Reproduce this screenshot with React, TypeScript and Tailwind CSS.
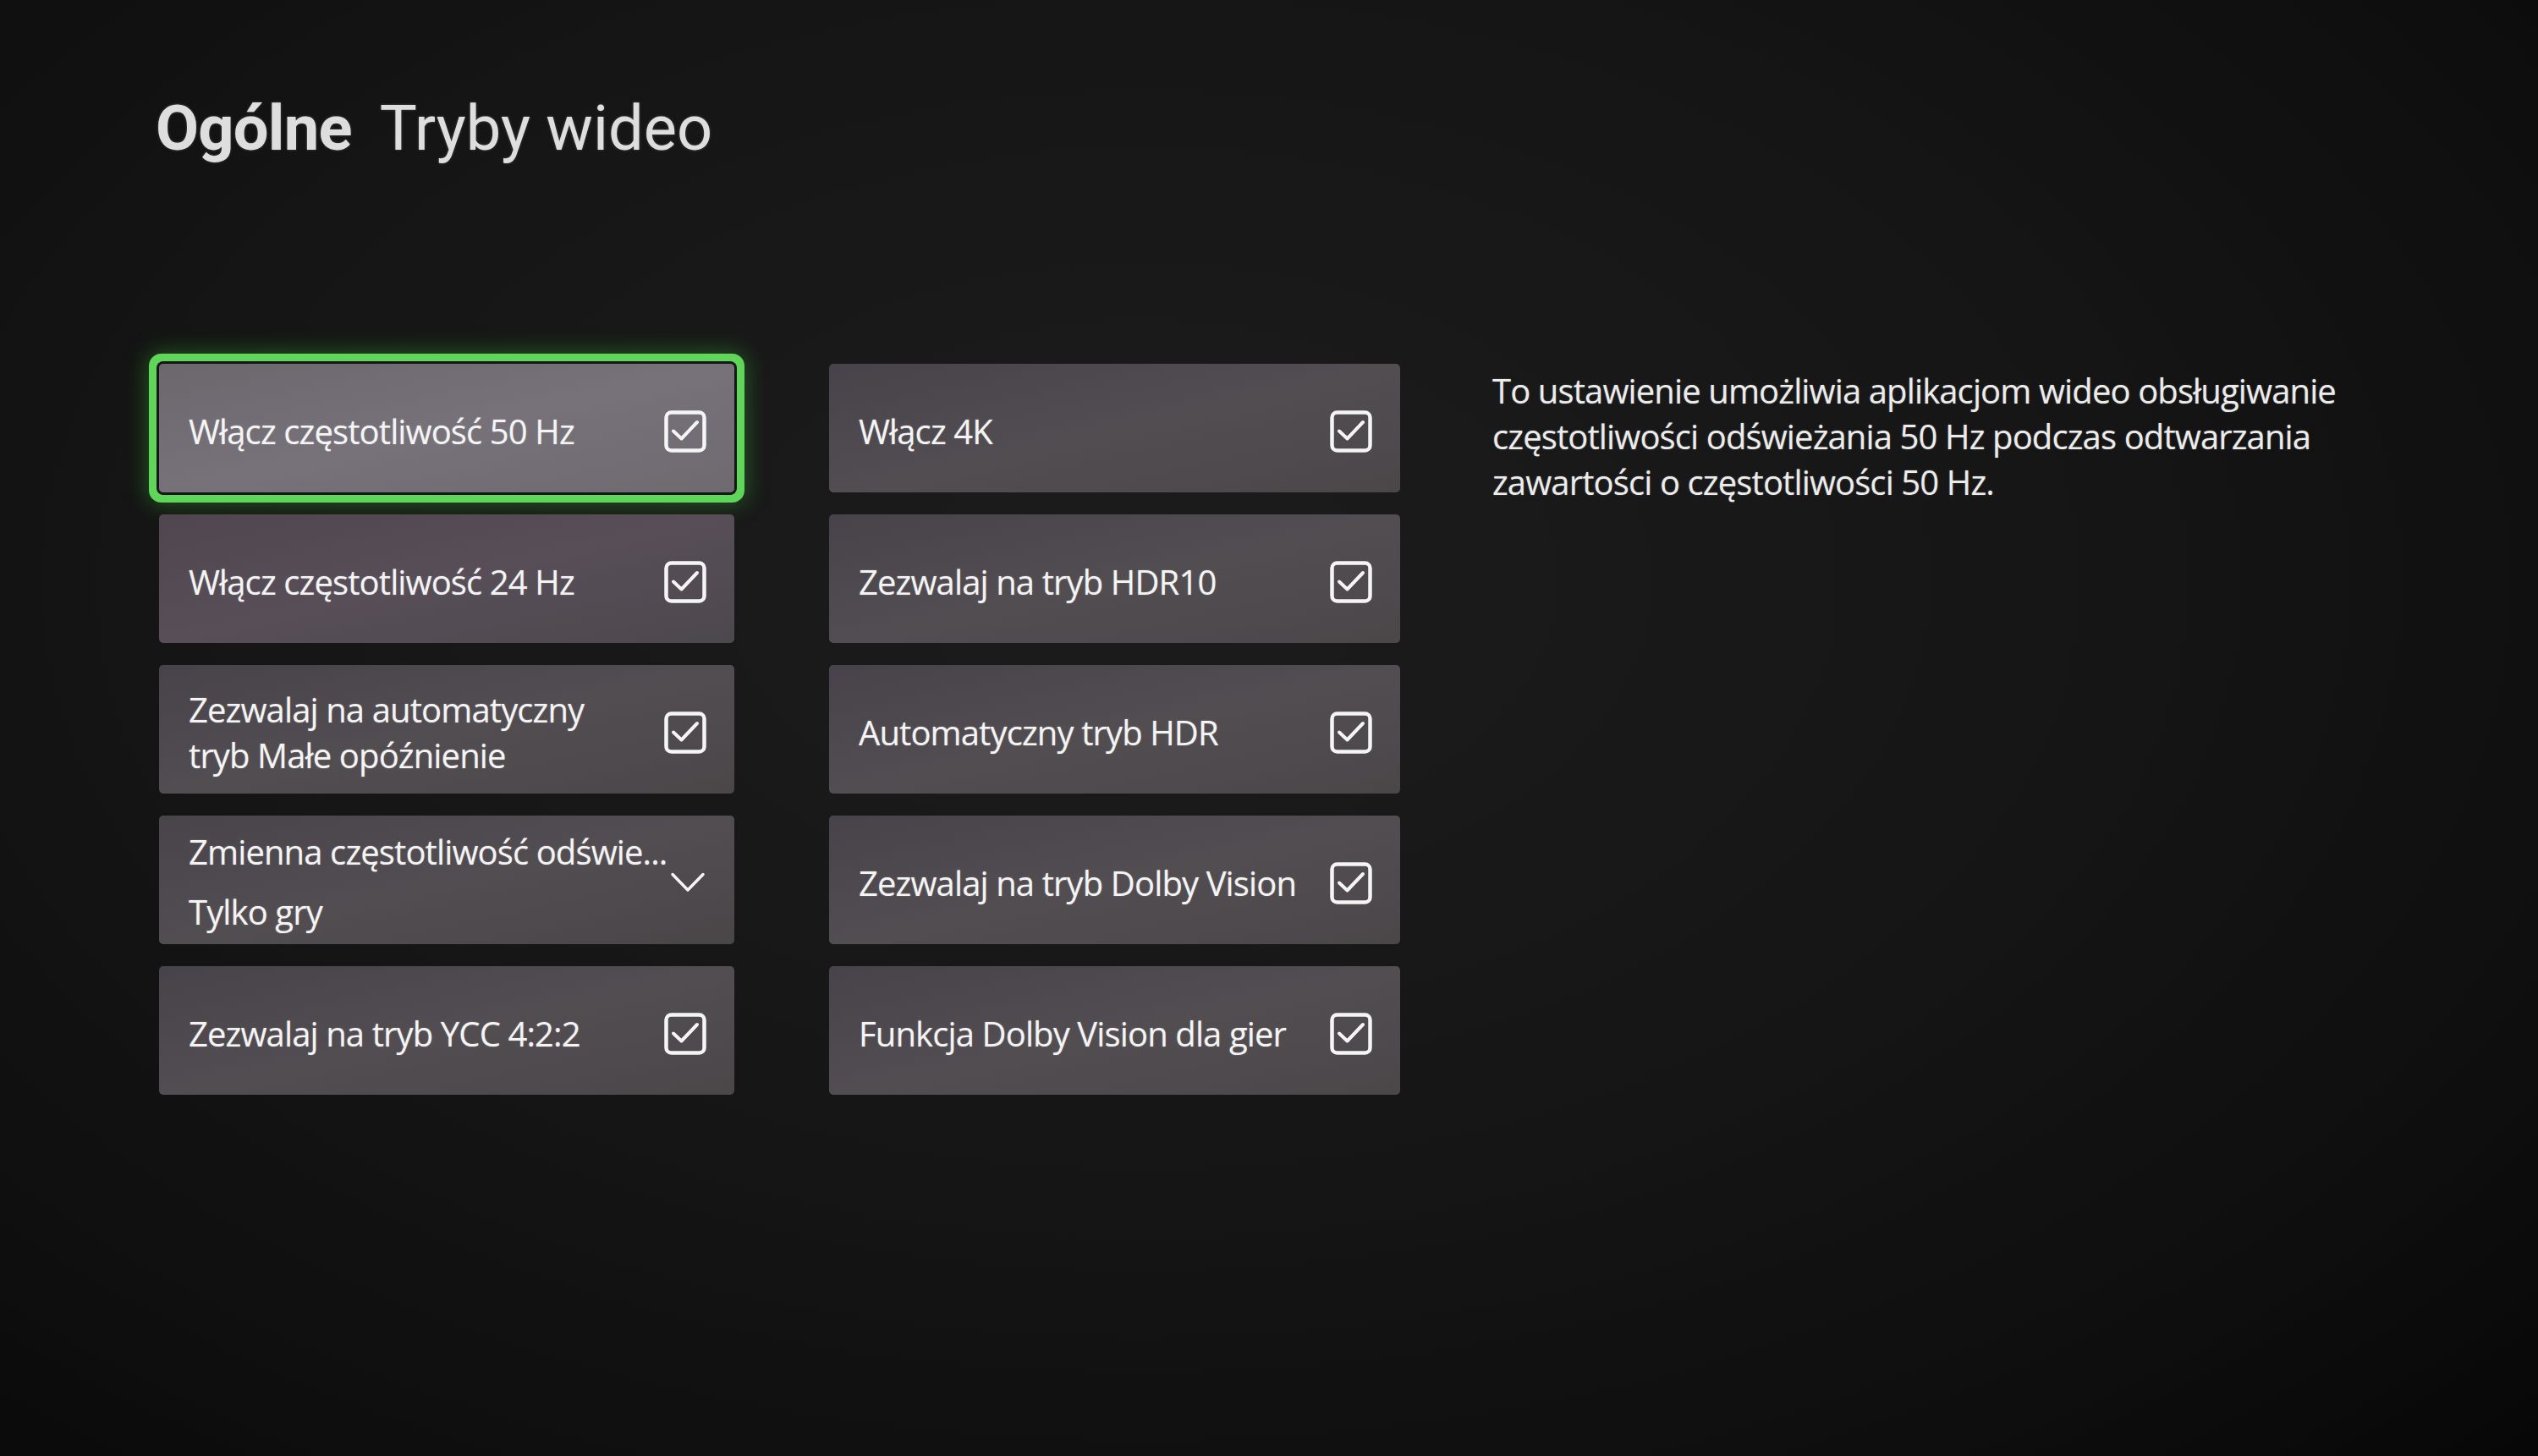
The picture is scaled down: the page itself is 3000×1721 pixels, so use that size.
import React from "react";

function CheckBox() {
  return (
    <svg width="50" height="50" viewBox="0 0 50 50" fill="none" className="shrink-0">
      <rect x="2.5" y="2.5" width="45" height="45" rx="6" stroke="#f5f5f5" strokeWidth="4.5" />
      <path d="M11 24.5 L20.5 33.5 L39 14" stroke="#f5f5f5" strokeWidth="4" strokeLinecap="round" strokeLinejoin="round" />
    </svg>
  );
}

function Chevron() {
  return (
    <div className="flex w-[50px] shrink-0 justify-center">
      <svg width="42" height="26" viewBox="0 0 42 26" fill="none">
        <path d="M3 3.5 L21 22 L39 3.5" stroke="#f5f5f5" strokeWidth="3.5" strokeLinecap="round" strokeLinejoin="round" />
      </svg>
    </div>
  );
}

type Item = { lines: string[]; focused?: boolean; tint?: boolean };

const labelText =
  "flex flex-col text-[40px] leading-[54px] tracking-[-0.022em] text-[#f4f4f4] [text-shadow:0_0_2px_rgba(255,255,255,0.3)]";

function Tile({ lines, focused, tint }: Item) {
  const base =
    "flex h-[152px] items-center justify-between rounded-[5px] pl-[35px] pr-[33px] pt-[7px]";
  const bg = focused
    ? "bg-gradient-to-br from-[#6c676d] via-[#77727a] to-[#6e6a70] shadow-[0_0_0_3px_#161616,0_0_0_12px_#5fd65a,0_0_26px_14px_rgba(60,190,60,0.38)]"
    : tint
    ? "bg-gradient-to-br from-[#4f4650] via-[#574e58] to-[#4d484d]"
    : "bg-gradient-to-br from-[#47434a] via-[#524d51] to-[#4b4749]";
  return (
    <div className={`${base} ${bg}`}>
      <div className={labelText}>
        {lines.map((l) => (
          <span key={l} className="whitespace-nowrap">
            {l}
          </span>
        ))}
      </div>
      <CheckBox />
    </div>
  );
}

function Dropdown({ label, value }: { label: string; value: string }) {
  return (
    <div className="flex h-[152px] items-center justify-between rounded-[5px] bg-gradient-to-br from-[#48444a] via-[#524d51] to-[#4a4648] pl-[35px] pr-[33px] pt-[5px]">
      <div className={`${labelText} gap-[17px]`}>
        <span className="whitespace-nowrap">{label}</span>
        <span className="whitespace-nowrap">{value}</span>
      </div>
      <Chevron />
    </div>
  );
}

export default function App() {
  return (
    <div className="h-[1721px] w-[3000px] overflow-hidden bg-[radial-gradient(ellipse_at_45%_40%,#1c1c1c_0%,#161616_45%,#0e0e0e_80%,#070707_100%)] font-['Open_Sans','Noto_Sans',sans-serif] text-white">
      <div className="pl-[184px] pt-[106px]">
        <h1 className="flex items-baseline gap-[33px] font-['Roboto','Noto_Sans',sans-serif] text-[74px] leading-[92px] text-[#dedede] [text-shadow:0_0_3px_rgba(255,255,255,0.25)]">
          <span className="font-bold tracking-[-0.01em]">Ogólne</span>
          <span className="font-normal">Tryby wideo</span>
        </h1>
      </div>

      <div className="mt-[232px] flex items-start pl-[188px]">
        <div className="flex w-[680px] flex-col gap-[26px]">
          <Tile lines={["Włącz częstotliwość 50 Hz"]} focused />
          <Tile lines={["Włącz częstotliwość 24 Hz"]} tint />
          <Tile lines={["Zezwalaj na automatyczny", "tryb Małe opóźnienie"]} />
          <Dropdown label="Zmienna częstotliwość odświe..." value="Tylko gry" />
          <Tile lines={["Zezwalaj na tryb YCC 4:2:2"]} />
        </div>

        <div className="ml-[112px] flex w-[675px] flex-col gap-[26px]">
          <Tile lines={["Włącz 4K"]} />
          <Tile lines={["Zezwalaj na tryb HDR10"]} />
          <Tile lines={["Automatyczny tryb HDR"]} />
          <Tile lines={["Zezwalaj na tryb Dolby Vision"]} />
          <Tile lines={["Funkcja Dolby Vision dla gier"]} />
        </div>

        <div className="ml-[109px] mt-[5px] flex flex-col text-[40px] leading-[54px] tracking-[-0.022em] text-[#ececec] [text-shadow:0_0_2px_rgba(255,255,255,0.3)]">
          <span className="whitespace-nowrap">To ustawienie umożliwia aplikacjom wideo obsługiwanie</span>
          <span className="whitespace-nowrap">częstotliwości odświeżania 50 Hz podczas odtwarzania</span>
          <span className="whitespace-nowrap">zawartości o częstotliwości 50 Hz.</span>
        </div>
      </div>
    </div>
  );
}
